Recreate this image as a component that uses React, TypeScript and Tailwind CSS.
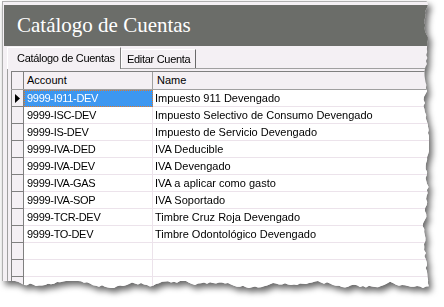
import React from 'react'

const rows = [
  { account: '9999-I911-DEV', name: 'Impuesto 911 Devengado' },
  { account: '9999-ISC-DEV', name: 'Impuesto Selectivo de Consumo Devengado' },
  { account: '9999-IS-DEV', name: 'Impuesto de Servicio Devengado' },
  { account: '9999-IVA-DED', name: 'IVA Deducible' },
  { account: '9999-IVA-DEV', name: 'IVA Devengado' },
  { account: '9999-IVA-GAS', name: 'IVA a aplicar como gasto' },
  { account: '9999-IVA-SOP', name: 'IVA Soportado' },
  { account: '9999-TCR-DEV', name: 'Timbre Cruz Roja Devengado' },
  { account: '9999-TO-DEV', name: 'Timbre Odontológico Devengado' },
  { account: '', name: '' },
  { account: '', name: '' },
  { account: '', name: '' },
]

// jagged "torn paper" outline for the right and bottom edges
function tornEdge() {
  let seed = 11
  const rnd = () => {
    seed = (seed * 9301 + 49297) % 233280
    return seed / 233280
  }
  const pts: string[] = ['0px 0px']
  let x = 424
  for (let y = 0; y <= 285; y += 3) {
    x += (rnd() - 0.5) * 3.6
    x = Math.max(419, Math.min(427, x))
    pts.push(`${x.toFixed(1)}px ${y}px`)
  }
  let y = 285
  for (let xx = Math.round(x); xx >= 0; xx -= 3) {
    y += (rnd() - 0.5) * 3.6
    y = Math.max(280, Math.min(290, y))
    pts.push(`${xx}px ${y.toFixed(1)}px`)
  }
  pts.push(`0px ${y.toFixed(1)}px`)
  return `polygon(${pts.join(', ')})`
}

const RowArrow = () => (
  <svg width="5" height="9" viewBox="0 0 5 9" className="block">
    <polygon points="0,0 5,4.5 0,9" fill="#000" />
  </svg>
)

export default function App() {
  return (
    <div className="relative w-[444px] h-[307px] overflow-hidden bg-white font-['Liberation_Sans',Arial,sans-serif] text-[11px] text-black">
      <div className="[filter:drop-shadow(3px_4px_3px_rgba(0,0,0,0.6))]">
        <div
          style={{ clipPath: tornEdge() }}
          className="ml-[2px] mt-[1px] w-[436px] h-[300px] bg-[#f4f0f4] border-l border-t border-[#b0b0b0] pt-[3px] pl-[1px]"
        >
          {/* title */}
          <div className="h-[41px] bg-[#6b6d69] flex items-center pl-[13px]">
            <span className="font-['Liberation_Serif','Times_New_Roman',serif] text-[21px] text-white leading-none">
              Catálogo de Cuentas
            </span>
          </div>

          {/* tabs */}
          <div className="h-[23px] flex items-end pl-[3px] relative z-10 tracking-[-0.3px]">
            <div className="h-[22px] w-[114px] border-t border-l border-white border-r border-r-[#808080] bg-[#f4f0f4] flex items-center pl-[9px] pb-[1px]">
              Catálogo de Cuentas
            </div>
            <div className="h-[19px] mb-[1px] w-[75px] border-t border-l border-white border-r border-r-[#696969] flex items-center pl-[5px] pt-[1px]">
              Editar Cuenta
            </div>
          </div>

          {/* tab page */}
          <div className="-mt-[1px] ml-[3px] border-t border-l border-t-[#a0a0a0] border-l-[#a0a0a0] pl-[3px] pt-[2px] h-[240px]">
            <div className="border-t border-[#808080]">
              {/* header */}
              <div className="flex h-[18px] border-b border-[#a0a0a0]">
                <div className="w-[13px] border-l border-r border-[#808080]" />
                <div className="w-[129px] border-r border-[#a0a0a0] pl-[3px] flex items-center">Account</div>
                <div className="flex-1 pl-[4px] flex items-center">Name</div>
              </div>
              {rows.map((r, i) => (
                <div key={i} className="flex h-[17px]">
                  <div className="w-[13px] border-l border-r border-b border-[#808080] bg-[#f4f0f4] flex items-center pl-[3px]">
                    {i === 0 && <RowArrow />}
                  </div>
                  {i === 0 ? (
                    <div className="w-[129px] border border-dotted border-[#e07a2a] bg-[#3d97f0] text-white pl-[2px] flex items-center tracking-[-0.3px]">
                      {r.account}
                    </div>
                  ) : (
                    <div className="w-[129px] bg-white border-r border-b border-[#ece3eb] pl-[3px] flex items-center tracking-[-0.3px]">
                      {r.account}
                    </div>
                  )}
                  <div className="flex-1 bg-white border-b border-[#ece3eb] pl-[2px] flex items-center whitespace-nowrap">
                    {r.name}
                  </div>
                </div>
              ))}
            </div>
          </div>
        </div>
      </div>
    </div>
  )
}
